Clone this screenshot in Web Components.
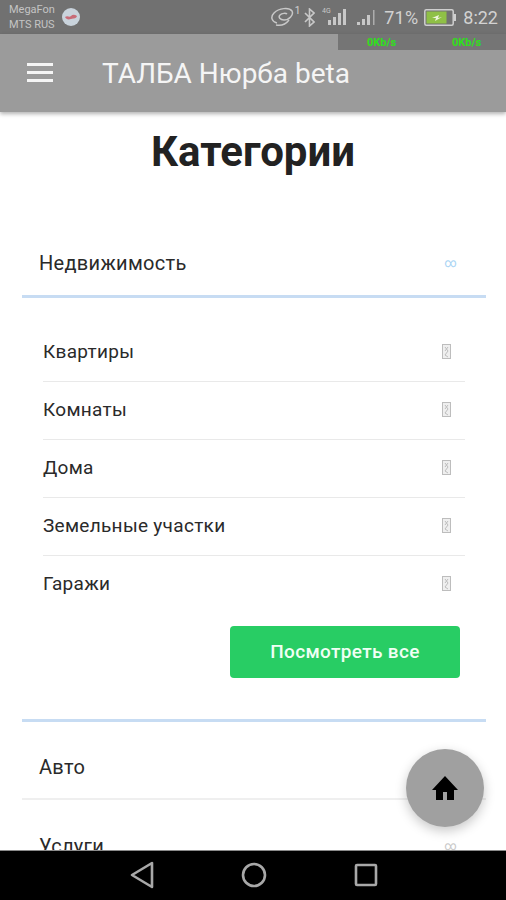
<!DOCTYPE html>
<html lang="ru">
<head>
<meta charset="utf-8">
<title>ТАЛБА Нюрба</title>
<style>
html, body { margin: 0; padding: 0; background: #fff; }
body { font-family: Roboto, "Noto Sans", sans-serif; width: 506px; height: 900px; overflow: hidden; }
</style>
</head>
<body>
<app-shell>
    <status-bar slot="top"></status-bar>
    <app-toolbar slot="top">ТАЛБА Нюрба beta</app-toolbar>
    <h-title>Категории</h-title>
    <cat-header open>Недвижимость</cat-header>
    <sub-list>
        <sub-item>Квартиры</sub-item>
        <sub-item>Комнаты</sub-item>
        <sub-item>Дома</sub-item>
        <sub-item>Земельные участки</sub-item>
        <sub-item last>Гаражи</sub-item>
        <see-all>Посмотреть все</see-all>
    </sub-list>
    <cat-header>Авто</cat-header>
    <cat-header last>Услуги</cat-header>
    <home-fab slot="over"></home-fab>
    <nav-bar slot="bottom"></nav-bar>
</app-shell>

<script>
class AppShell extends HTMLElement {
    constructor() {
        super()
        this.attachShadow({ mode: 'open' }).innerHTML = `
            <style>
                :host { display: flex; flex-direction: column; width: 506px; height: 900px; position: relative; overflow: hidden; }
                main { flex: 1; min-height: 0; overflow: hidden; }
            </style>
            <slot name="top"></slot>
            <main><slot></slot></main>
            <slot name="over"></slot>
            <slot name="bottom"></slot>
        `
    }
}

class StatusBar extends HTMLElement {
    constructor() {
        super()
        this.attachShadow({ mode: 'open' }).innerHTML = `
            <style>
                :host { display: flex; align-items: center; height: 34px; flex: none; background: #717171; color: #d2d2d2; padding: 0 8px 0 9px; box-sizing: border-box; font-family: Roboto, sans-serif; }
                .carrier { font-size: 11px; line-height: 15px; color: #c4c4c4; }
                .globe { width: 18px; height: 18px; margin: 0 0 1px 7px; }
                .right { margin-left: auto; display: flex; align-items: center; height: 100%; }
                .pct { font-size: 18px; margin: 0 6px 0 6px; letter-spacing: .2px; }
                .time { font-size: 18px; margin-left: 7px; }
                sup { font-size: 10px; line-height: 1; align-self: flex-start; margin: 6px 4px 0 1px; }
                svg { display: block; }
            </style>
            <div class="carrier">MegaFon<br>MTS RUS</div>
            <svg class="globe" viewBox="0 0 18 18">
                <circle cx="9" cy="9" r="9" fill="#c9d3dc"/>
                <path d="M3 9c3-2 4 1 6-1s4-1 6 0c-1 3-3 2-6 3s-5 0-6-2z" fill="#c8535f" opacity=".8"/>
            </svg>
            <div class="right">
                <svg width="24" height="20" viewBox="0 0 24 20" fill="none" stroke="#c8c8c8" stroke-width="1.5">
                    <path d="M7 16C2 15 0 10 4 6c5-5 15-6 18-2 2 4-3 9-8 9-4 0-6-3-4-5 2-2 6-2 7-1"/>
                    <path d="M6 18c5 1 10-1 13-5"/>
                </svg>
                <sup>1</sup>
                <svg width="11" height="19" viewBox="0 0 11 19" fill="none" stroke="#c8c8c8" stroke-width="1.6">
                    <path d="M1 5l9 9-4.500 4V1L10 5 1 14"/>
                </svg>
                <svg style="margin-left:7px" width="27" height="20" viewBox="0 0 27 20" fill="#c8c8c8">
                    <text x="0" y="6" font-size="7" font-family="Roboto">4G</text>
                    <rect x="6" y="13" width="3" height="5"/>
                    <rect x="11" y="10" width="3" height="8"/>
                    <rect x="16" y="6" width="3" height="12"/>
                    <rect x="21" y="2" width="3" height="16"/>
                </svg>
                <svg style="margin-left:7px" width="22" height="20" viewBox="0 0 22 20" fill="#c8c8c8">
                    <rect x="1" y="15" width="3" height="3"/>
                    <rect x="6" y="12" width="3" height="6"/>
                    <rect x="11" y="8" width="3" height="10"/>
                    <rect x="17" y="3" width="1.500" height="15" opacity=".7"/>
                </svg>
                <span class="pct">71%</span>
                <svg width="32" height="17" viewBox="0 0 32 17">
                    <rect x=".8" y=".8" width="28.400" height="15.400" rx="1.500" fill="none" stroke="#cfcfcf" stroke-width="1.500"/>
                    <rect x="2.500" y="2.500" width="20" height="12" fill="#8fc046"/>
                    <rect x="30" y="5" width="2" height="7" fill="#cfcfcf"/>
                    <path d="M8 9l7-3-1 3 4-1-7 4 1-3z" fill="#eef5dc"/>
                </svg>
                <span class="time">8:22</span>
            </div>
        `
    }
}

class AppToolbar extends HTMLElement {
    constructor() {
        super()
        this.attachShadow({ mode: 'open' }).innerHTML = `
            <style>
                :host { display: flex; align-items: center; height: 78px; flex: none; position: relative; background: #9b9b9b; color: #f5f5f5; box-shadow: 0 2px 4px rgba(0,0,0,.3); padding-left: 27px; box-sizing: border-box; z-index: 1; font-family: Roboto, sans-serif; }
                .burger { display: flex; flex-direction: column; gap: 5px; width: 26px; margin: 0 49px 2px 0; }
                .burger i { display: block; height: 3px; background: #f5f5f5; }
                .title { font-size: 28px; }
                .speed { position: absolute; top: 0; right: 0; width: 168px; height: 16px; background: #757575; color: #2fe01a; font-size: 11px; font-weight: 700; line-height: 17px; }
                .speed span { position: absolute; top: 0; }
            </style>
            <div class="burger"><i></i><i></i><i></i></div>
            <div class="title"><slot></slot></div>
            <div class="speed"><span style="left:29px">0Kb/s</span><span style="left:114px">0Kb/s</span></div>
        `
    }
}

class HTitle extends HTMLElement {
    constructor() {
        super()
        this.attachShadow({ mode: 'open' }).innerHTML = `
            <style>
                :host { display: block; text-align: center; font-size: 42px; font-weight: 700; color: #222; line-height: 44px; padding: 18px 0 56px; font-family: Roboto, sans-serif; }
            </style>
            <slot></slot>
        `
    }
}

class CatHeader extends HTMLElement {
    constructor() {
        super()
        const open = this.hasAttribute('open')
        const last = this.hasAttribute('last')
        this.attachShadow({ mode: 'open' }).innerHTML = `
            <style>
                :host { display: flex; align-items: center; justify-content: space-between; margin: 0 20px 0 22px; height: ${open ? '68' : '78'}px; padding: ${open ? '0' : '14px'} 29px 0 17px; box-sizing: border-box; font-size: 20px; color: #2a2a2a; font-family: Roboto, sans-serif; letter-spacing: .3px; border-bottom: ${open ? '3px solid #c7dcf3' : last ? '0' : '2px solid #efefef'}; }
                i { font-style: normal; font-size: 12px; color: ${open ? '#a8d4f4' : '#c8c8c8'}; }
            </style>
            <span><slot></slot></span>
            <i>∞</i>
        `
    }
}

class SubList extends HTMLElement {
    constructor() {
        super()
        this.attachShadow({ mode: 'open' }).innerHTML = `
            <style>
                :host { display: block; margin: 0 20px 0 22px; padding: 26px 0 41px; border-bottom: 3px solid #c7dcf3; }
            </style>
            <slot></slot>
        `
    }
}

class SubItem extends HTMLElement {
    constructor() {
        super()
        const last = this.hasAttribute('last')
        this.attachShadow({ mode: 'open' }).innerHTML = `
            <style>
                :host { display: flex; align-items: center; justify-content: space-between; height: 58px; margin: 0 21px; padding: 0 14px ${last ? '3px' : '2px'} 0; box-sizing: border-box; font-size: 19px; color: #2a2a2a; letter-spacing: .3px; font-family: Roboto, sans-serif; border-bottom: ${last ? '0' : '1px solid #e9e9e9'}; }
                svg { display: block; }
            </style>
            <span><slot></slot></span>
            <svg width="9" height="15" viewBox="0 0 9 15" fill="none" stroke="#bdbdbd" stroke-width="1">
                <rect x=".5" y=".5" width="8" height="14" fill="#efefef"/>
                <path d="M3 3l3 4-3 4 3 2M6 3 3 7"/>
            </svg>
        `
    }
}

class SeeAll extends HTMLElement {
    constructor() {
        super()
        this.attachShadow({ mode: 'open' }).innerHTML = `
            <style>
                :host { display: flex; justify-content: flex-end; margin: 12px 26px 0 0; }
                button { all: unset; display: block; width: 230px; height: 52px; line-height: 52px; text-align: center; background: #28cd64; border-radius: 4px; color: #f0fff4; font-family: Roboto, sans-serif; font-size: 19px; font-weight: 500; letter-spacing: .35px; }
            </style>
            <button><slot></slot></button>
        `
    }
}

class HomeFab extends HTMLElement {
    constructor() {
        super()
        this.attachShadow({ mode: 'open' }).innerHTML = `
            <style>
                :host { position: absolute; left: 406px; top: 749px; width: 78px; height: 78px; border-radius: 50%; background: #a0a0a0; box-shadow: 0 4px 12px rgba(0,0,0,.22); display: flex; align-items: center; justify-content: center; z-index: 2; }
            </style>
            <svg width="28" height="26" viewBox="0 0 28 26" fill="#000">
                <path d="M14 1 1 15h4v10h7v-8h4v8h7V15h4z"/>
            </svg>
        `
    }
}

class NavBar extends HTMLElement {
    constructor() {
        super()
        this.attachShadow({ mode: 'open' }).innerHTML = `
            <style>
                :host { display: flex; align-items: center; justify-content: space-between; flex: none; height: 50px; background: #000; border-top: 1px solid #8a8a8a; box-sizing: border-box; padding: 1px 128px 2px 130px; z-index: 3; position: relative; }
                svg { display: block; }
            </style>
            <svg width="24" height="28" viewBox="0 0 24 28" fill="none" stroke="#a8a8a8" stroke-width="2.600" stroke-linejoin="round">
                <path d="M22 2v24L2 14z"/>
            </svg>
            <svg width="26" height="26" viewBox="0 0 26 26" fill="none" stroke="#a8a8a8" stroke-width="2.600">
                <circle cx="13" cy="13" r="11"/>
            </svg>
            <svg width="24" height="24" viewBox="0 0 24 24" fill="none" stroke="#a8a8a8" stroke-width="2.600" stroke-linejoin="round">
                <rect x="2" y="2" width="20" height="20" rx="1"/>
            </svg>
        `
    }
}

customElements.define('app-shell', AppShell)
customElements.define('status-bar', StatusBar)
customElements.define('app-toolbar', AppToolbar)
customElements.define('h-title', HTitle)
customElements.define('cat-header', CatHeader)
customElements.define('sub-list', SubList)
customElements.define('sub-item', SubItem)
customElements.define('see-all', SeeAll)
customElements.define('home-fab', HomeFab)
customElements.define('nav-bar', NavBar)
</script>
</body>
</html>
